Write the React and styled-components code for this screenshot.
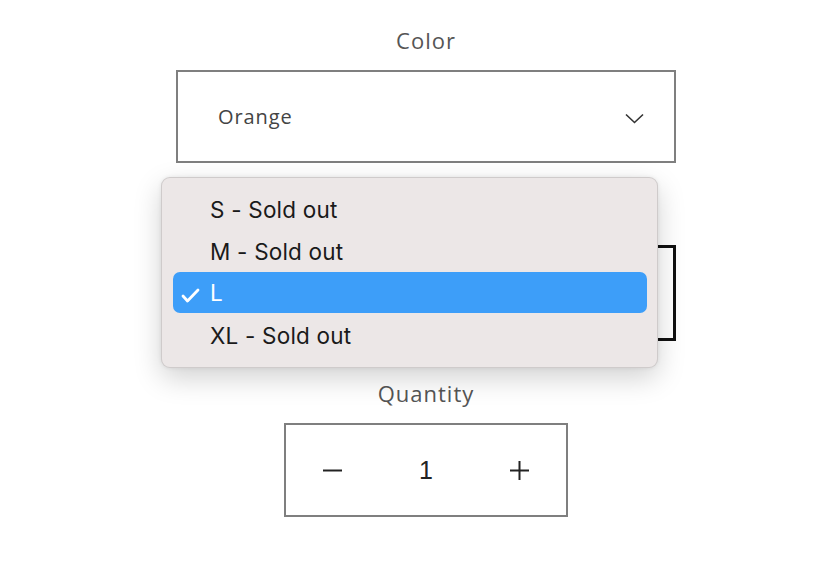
import React from 'react';
import styled, { createGlobalStyle } from 'styled-components';

const GlobalStyle = createGlobalStyle`
    html, body {
        margin: 0;
        padding: 0;
        background: #ffffff;
    }
    body {
        font-family: "Open Sans", "Noto Sans", sans-serif;
    }
`;

const Page = styled.main`
    width: 500px;
    padding: 25px 0 0 176px;
    display: flex;
    flex-direction: column;
`;

const Field = styled.div`
    position: relative;
    display: flex;
    flex-direction: column;
    align-items: center;
    margin-bottom: ${props => props.$last ? '0' : '37px'};
`;

const Label = styled.label`
    height: 30px;
    line-height: 30px;
    margin-bottom: 15px;
    font-size: 22px;
    letter-spacing: 1px;
    color: #555555;
    visibility: ${props => props.$hidden ? 'hidden' : 'visible'};
`;

const Select = styled.div`
    box-sizing: border-box;
    width: 500px;
    height: ${props => props.$focused ? '96px' : '93px'};
    border: ${props => props.$focused ? '3px solid #111111' : '2px solid #7f7f7f'};
    display: flex;
    align-items: center;
    justify-content: space-between;
    padding: 0 30px 0 40px;
    font-size: 20px;
    letter-spacing: 0.9px;
    color: #444444;
`;

const Chevron = styled.svg`
    width: 19px;
    height: 11px;
    margin-top: 4px;
`;

const Menu = styled.ul`
    position: absolute;
    z-index: 2;
    top: -23px;
    left: -15px;
    box-sizing: border-box;
    width: 497px;
    margin: 0;
    padding: 10px 10px 11px 11px;
    list-style: none;
    background: #ece7e7;
    border: 1px solid rgba(0, 0, 0, 0.12);
    border-radius: 9px;
    box-shadow: 0 10px 28px rgba(0, 0, 0, 0.18), 0 0 4px rgba(0, 0, 0, 0.08);
    font-family: Inter, "Liberation Sans", sans-serif;
`;

const Option = styled.li`
    position: relative;
    padding-left: 37px;
    display: flex;
    align-items: center;
    font-size: 22.5px;
    letter-spacing: 0.2px;
    color: ${props => props.$selected ? '#ffffff' : '#1a1a1a'};
    background: ${props => props.$selected ? '#3d9ef9' : 'transparent'};
    border-radius: 7px;
    margin-bottom: ${props => props.$selected ? '1px' : '0'};
    height: ${props => props.$selected ? '41px' : '42px'};
`;

const Check = styled.svg`
    position: absolute;
    left: 8px;
    top: 16px;
    width: 19px;
    height: 15px;
`;

const Quantity = styled.div`
    box-sizing: border-box;
    width: 284px;
    height: 94px;
    border: 2px solid #7f7f7f;
    display: grid;
    grid-template-columns: repeat(3, 1fr);
    align-items: center;
    justify-items: center;
`;

const QtyButton = styled.button`
    background: none;
    border: none;
    padding: 0;
    width: 100%;
    height: 100%;
    display: flex;
    align-items: center;
    justify-content: center;
    cursor: pointer;
`;

const QtyValue = styled.span`
    font-family: "Liberation Sans", Arial, sans-serif;
    font-size: 25px;
    color: #222222;
`;

const options = [
    { label: 'S - Sold out' },
    { label: 'M - Sold out' },
    { label: 'L', selected: true },
    { label: 'XL - Sold out' },
];

export default function App() {
    return (
        <>
            <GlobalStyle />
            <Page>
                <Field>
                    <Label>Color</Label>
                    <Select>
                        <span>Orange</span>
                        <Chevron viewBox="0 0 19 11" fill="none">
                            <path d="M1 1.5l8.5 8 8.5-8" stroke="#333" strokeWidth="1.6" />
                        </Chevron>
                    </Select>
                </Field>

                <Field>
                    <Label $hidden>Size</Label>
                    <Select $focused />
                    <Menu>
                        {options.map(o => (
                            <Option key={o.label} $selected={o.selected}>
                                {o.selected && (
                                    <Check viewBox="0 0 19 15" fill="none">
                                        <path d="M2 8l4.5 5L17 2" stroke="#fff" strokeWidth="2.8" strokeLinecap="round" strokeLinejoin="round" />
                                    </Check>
                                )}
                                {o.label}
                            </Option>
                        ))}
                    </Menu>
                </Field>

                <Field $last>
                    <Label>Quantity</Label>
                    <Quantity>
                        <QtyButton aria-label="Decrease">
                            <svg width="19" height="19" viewBox="0 0 19 19">
                                <path d="M0 9.5h19" stroke="#222" strokeWidth="2" />
                            </svg>
                        </QtyButton>
                        <QtyValue>1</QtyValue>
                        <QtyButton aria-label="Increase">
                            <svg width="19" height="19" viewBox="0 0 19 19">
                                <path d="M0 9.5h19M9.5 0v19" stroke="#222" strokeWidth="2" />
                            </svg>
                        </QtyButton>
                    </Quantity>
                </Field>
            </Page>
        </>
    );
}
